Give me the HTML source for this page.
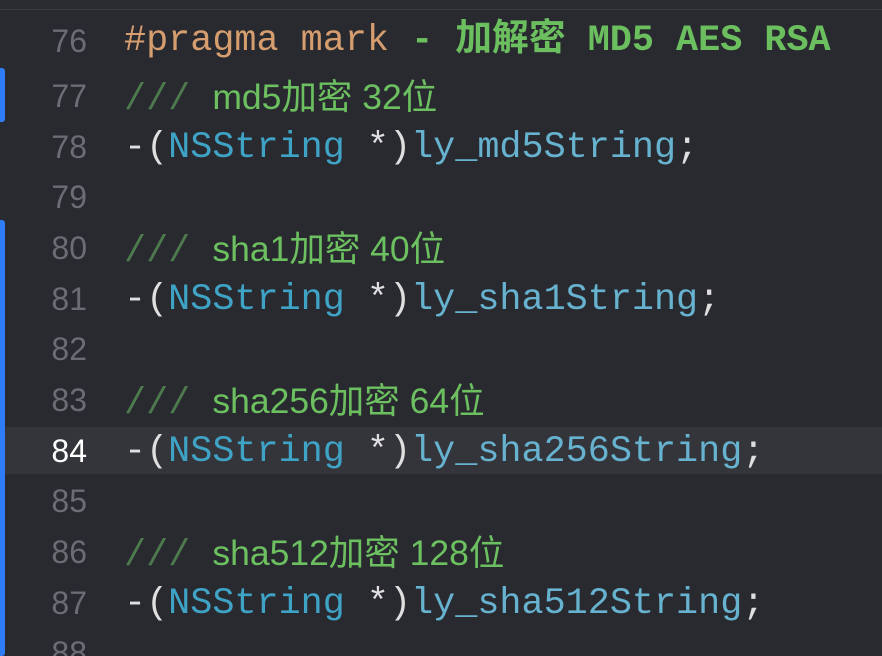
<!DOCTYPE html>
<html><head><meta charset="utf-8"><style>
html,body{margin:0;padding:0;background:#292a30;width:882px;height:656px;overflow:hidden;position:relative}
.top{position:absolute;left:0;top:0;width:882px;height:9px;background:#2b2c32;border-bottom:1px solid #3a3b41}
.bar{position:absolute;left:0;width:5px;background:#2f7df6;border-radius:0 3px 3px 0}
.hl{position:absolute;left:0;top:427px;width:882px;height:47px;background:#34353b}
.ln{position:absolute;left:0;width:87px;text-align:right;font-family:"Liberation Sans",sans-serif;font-size:32px;color:#6c6c74;line-height:50.8px}
.code{position:absolute;left:124px;font-family:"Liberation Mono",monospace;font-size:36.8px;color:#dfdfe0;line-height:50.8px;white-space:pre}
.pp{color:#d69e6f}.mk{color:#6cbf5f;font-weight:bold}.ty{color:#3fa3c6}.me{color:#66b2cf}
.sl{color:#4d7a4c}.cm{color:#6cc060;font-family:"Liberation Sans","Noto Sans CJK SC",sans-serif;font-size:35.5px}
</style></head><body>
<div class="top"></div>
<div class="hl"></div>
<div class="bar" style="top:68px;height:54px"></div>
<div class="bar" style="top:220px;height:436px"></div>
<div class="ln" style="top:16px">76</div>
<div class="ln" style="top:71px">77</div>
<div class="ln" style="top:122px">78</div>
<div class="ln" style="top:172px">79</div>
<div class="ln" style="top:223px">80</div>
<div class="ln" style="top:274px">81</div>
<div class="ln" style="top:324px">82</div>
<div class="ln" style="top:375px">83</div>
<div class="ln" style="top:426px;color:#fff">84</div>
<div class="ln" style="top:476px">85</div>
<div class="ln" style="top:527px">86</div>
<div class="ln" style="top:578px">87</div>
<div class="ln" style="top:628px">88</div>
<div class="code" style="top:16px"><span class="pp">#pragma mark</span> <span class="mk">- <span style="font-family:'Liberation Mono','Noto Sans CJK SC',monospace">加解密</span> MD5 AES RSA</span></div>
<div class="code" style="top:72px"><span class="sl">///</span> <span class="cm">md5加密 32位</span></div>
<div class="code" style="top:123px">-(<span class="ty">NSString</span> *)<span class="me">ly_md5String</span>;</div>
<div class="code" style="top:224px"><span class="sl">///</span> <span class="cm">sha1加密 40位</span></div>
<div class="code" style="top:275px">-(<span class="ty">NSString</span> *)<span class="me">ly_sha1String</span>;</div>
<div class="code" style="top:376px"><span class="sl">///</span> <span class="cm">sha256加密 64位</span></div>
<div class="code" style="top:427px">-(<span class="ty">NSString</span> *)<span class="me">ly_sha256String</span>;</div>
<div class="code" style="top:528px"><span class="sl">///</span> <span class="cm">sha512加密 128位</span></div>
<div class="code" style="top:579px">-(<span class="ty">NSString</span> *)<span class="me">ly_sha512String</span>;</div>
</body></html>
